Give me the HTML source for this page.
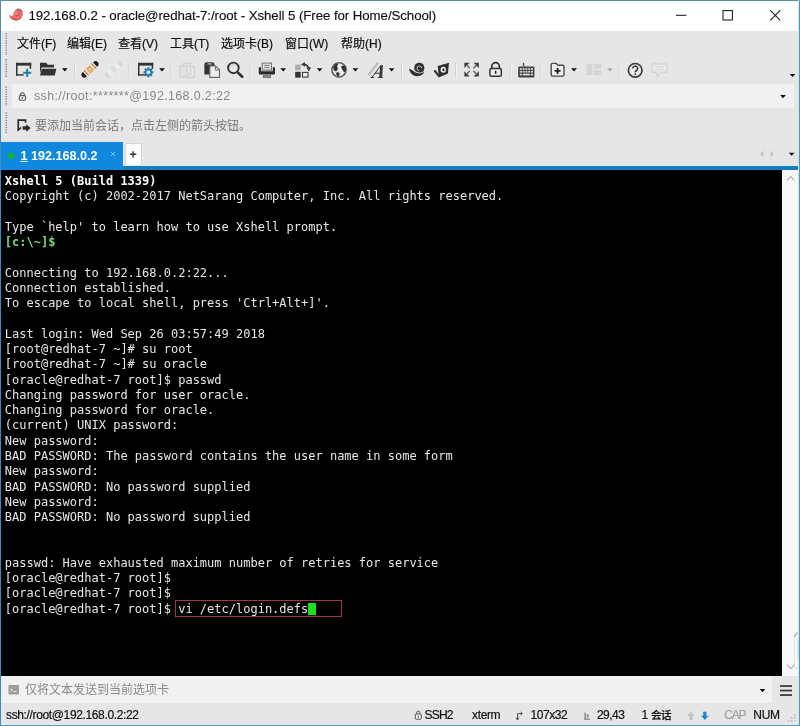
<!DOCTYPE html>
<html lang="zh-CN">
<head>
<meta charset="utf-8">
<title>192.168.0.2 - oracle@redhat-7:/root - Xshell 5 (Free for Home/School)</title>
<style>
*{box-sizing:border-box;margin:0;padding:0}
html,body{width:800px;height:726px;overflow:hidden;background:#e6e6e6}
body{position:relative;font-family:"Liberation Sans","Noto Sans CJK SC",sans-serif;color:#1a1a1a}
.abs{position:absolute}
#soft{will-change:transform;filter:blur(.5px);position:absolute;left:-8px;top:-8px;width:816px;height:742px;background:#4b8fb4}
#win{position:absolute;left:8px;top:8px;width:800px;height:726px;background:#e6e6e6;overflow:hidden}
#titlebar{left:0;top:0;width:800px;height:31px;background:#fff}
#title{left:28.5px;top:6.8px;font-size:13.3px;line-height:17px;color:#111;white-space:nowrap;letter-spacing:-0.085px;-webkit-text-stroke:.15px #111}
.mi{position:absolute;top:37px;font-size:12px;line-height:14px;white-space:nowrap;color:#111;-webkit-text-stroke:.2px #111}
#addr{left:12px;top:84px;width:782px;height:24px;background:#f1f1f1}
#addrtxt{left:34px;top:89px;font-size:12.5px;line-height:15px;color:#888;white-space:nowrap;letter-spacing:.35px}
#hint{left:35px;top:119px;font-size:12px;line-height:14px;color:#787878;white-space:nowrap}
#tab{left:1px;top:142px;width:122px;height:27.500px;background:#0f88de}
#tabtxt{left:20.5px;top:149.4px;font-size:12.6px;line-height:14px;color:#fff;font-weight:bold;white-space:nowrap}
#plus{left:125px;top:143px;width:17px;height:22px;background:#fcfcfc;border:1px solid #d8d8d8;border-bottom:none}
#tabline{left:0;top:165px;width:800px;height:4.500px;background:#177dbf;border-top:1px solid #d3ebf5}
#term{left:1px;top:169.500px;width:781px;height:506.500px;background:#000}
#scroll{left:782px;top:169.500px;width:17px;height:506.500px;background:#f8f8f8}
pre{position:absolute;left:3.8px;top:4.4px;font-family:"DejaVu Sans Mono","Liberation Mono",monospace;font-size:12px;line-height:15.28px;color:#e6e6e6;white-space:pre}
pre b{color:#fff}
pre .g{color:#7ddc7d;font-weight:bold}
#cursor{display:inline-block;width:7.5px;height:12.5px;background:#19e01a;vertical-align:-2.5px}
#redbox{left:174.5px;top:599.5px;width:167px;height:17.5px;border:1px solid #9c3d3a}
#compose{left:1px;top:676px;width:771px;height:27px;background:#f1f1f1}
#composetxt{left:25px;top:683.4px;font-size:12px;line-height:14px;color:#8a8a8a;white-space:nowrap}
.st{position:absolute;top:708.2px;font-size:12px;line-height:14px;white-space:nowrap;color:#111;-webkit-text-stroke:.2px currentColor}
#bl{left:0;top:0;width:1px;height:726px;background:linear-gradient(#5b8b96 0,#5b8b96 31px,#3b8ac4 31px,#3b8ac4 100%)}
#bt{left:0;top:0;width:800px;height:1px;background:#5d9096}
#br{left:798px;top:0;width:2px;height:726px;background:#4f98b8;border-left:1px solid #cfe4ee}
#bb{left:0;top:725px;width:800px;height:1px;background:#4d9fc3}
svg{position:absolute;left:0;top:0;overflow:visible}
</style>
</head>
<body>
<div id="soft">
<div id="win">
<div id="titlebar" class="abs"></div>
<div id="title" class="abs">192.168.0.2 - oracle@redhat-7:/root - Xshell 5 (Free for Home/School)</div>
<div class="mi" style="left:17px">文件(F)</div>
<div class="mi" style="left:67px">编辑(E)</div>
<div class="mi" style="left:118px">查看(V)</div>
<div class="mi" style="left:170px">工具(T)</div>
<div class="mi" style="left:221px">选项卡(B)</div>
<div class="mi" style="left:285px">窗口(W)</div>
<div class="mi" style="left:341px">帮助(H)</div>
<div id="addr" class="abs"></div>
<div id="addrtxt" class="abs">ssh://root:*******@192.168.0.2:22</div>
<div id="hint" class="abs">要添加当前会话，点击左侧的箭头按钮。</div>
<div id="tabline" class="abs"></div>
<div id="tab" class="abs"></div>
<div id="tabtxt" class="abs"><u>1</u> 192.168.0.2</div>
<div id="plus" class="abs"></div>
<div id="term" class="abs"><pre><b>Xshell 5 (Build 1339)</b>
Copyright (c) 2002-2017 NetSarang Computer, Inc. All rights reserved.

Type `help' to learn how to use Xshell prompt.
<span class="g">[c:\~]$</span>

Connecting to 192.168.0.2:22...
Connection established.
To escape to local shell, press 'Ctrl+Alt+]'.

Last login: Wed Sep 26 03:57:49 2018
[root@redhat-7 ~]# su root
[root@redhat-7 ~]# su oracle
[oracle@redhat-7 root]$ passwd
Changing password for user oracle.
Changing password for oracle.
(current) UNIX password:
New password:
BAD PASSWORD: The password contains the user name in some form
New password:
BAD PASSWORD: No password supplied
New password:
BAD PASSWORD: No password supplied


passwd: Have exhausted maximum number of retries for service
[oracle@redhat-7 root]$
[oracle@redhat-7 root]$
[oracle@redhat-7 root]$ vi /etc/login.defs<span id="cursor"></span></pre></div>
<div id="scroll" class="abs"></div>
<div id="redbox" class="abs"></div>
<div id="compose" class="abs"></div>
<div id="composetxt" class="abs">仅将文本发送到当前选项卡</div>
<div class="st" style="left:6px;letter-spacing:-.36px">ssh://root@192.168.0.2:22</div>
<div class="st" style="left:424.5px;letter-spacing:-.8px">SSH2</div>
<div class="st" style="left:472px;letter-spacing:-.35px">xterm</div>
<div class="st" style="left:530.5px;letter-spacing:-.45px">107x32</div>
<div class="st" style="left:597px;letter-spacing:-.55px">29,43</div>
<div class="st" style="left:641.5px;letter-spacing:-.3px">1 <span style="font-size:10.6px;letter-spacing:-.6px;font-weight:500;position:relative;top:-.5px">会话</span></div>
<div class="st" style="left:724.3px;color:#a2a2a2;letter-spacing:-1.2px">CAP</div>
<div class="st" style="left:753.3px;letter-spacing:-.3px">NUM</div>
<svg width="800" height="726" viewBox="0 0 800 726" aria-hidden="true">
<defs>
<path id="dd" d="M-2.9,-1.5H2.9L0,1.6Z"/>
<g id="sep"><rect x="-0.5" y="63" width="1" height="14.500" fill="#d4d4d4"/><rect x="0.5" y="63" width="1" height="14.500" fill="#f2f2f2"/></g>
<g id="winframe" fill="#333"><rect x="0" y="0" width="15.2" height="2.8"/><rect x="0" y="0" width="1.5" height="12.8"/><rect x="0" y="11.4" width="7.6" height="1.4"/><rect x="13.7" y="0" width="1.5" height="6"/></g>
<radialGradient id="logo" cx="0.55" cy="0.5" r="0.6"><stop offset="0" stop-color="#f79a90"/><stop offset="0.55" stop-color="#e8706a"/><stop offset="1" stop-color="#c65050"/></radialGradient>
</defs>
<!-- app logo -->
<g><path d="M9.300,14.200Q10.300,16 12.300,16.600Q13,11.500 16.800,9Q20.300,8.300 22.300,11.200Q23.600,14.800 21.600,17.800Q19,20.600 15.300,20.400Q11.800,20 10,17.300Q9.300,15.800 9.300,14.200Z" fill="url(#logo)"/><path d="M16.800,9.200Q20.500,8.600 22.400,11.600" fill="none" stroke="#8a5a50" stroke-width="1.200" opacity="0.7"/><path d="M15.200,15.300Q16.600,16.500 18.400,15.400Q19.400,14 18.200,12.800" fill="none" stroke="#c23f3f" stroke-width="1.100"/><path d="M10,16.600Q12.500,20.200 16.300,20.200Q19.500,20 21.300,17.800" fill="none" stroke="#b54a4a" stroke-width="1" opacity="0.8"/></g>
<!-- window controls -->
<g stroke="#222" stroke-width="1.1" fill="none">
<path d="M676,15.3H686.5"/>
<rect x="723" y="10.6" width="9.4" height="9.4"/>
<path d="M770.300,10.400L780.200,20.300M780.200,10.400L770.300,20.300"/>
</g>
<!-- grips -->
<g stroke="#6a6a6a" stroke-width="1.2" stroke-dasharray="1.2 1.2" fill="none">
<path d="M6.2,33V55"/><path d="M6.2,59V78"/><path d="M6.2,86.500V106"/><path d="M6.2,112.500V133"/>
</g>
<!-- toolbar -->
<g>
<use href="#winframe" x="16" y="62.800"/>
<path d="M23.200,71.800h3v-3h2v3h3v2h-3v3h-2v-3h-3z" fill="#1a7fa3"/>
<g fill="#333"><path d="M40,62.800h6.200l1.500,1.900h6.300v2.800h-12.400l-1.600,6z"/><path d="M41.800,68.700h14.600l-1.600,6.900h-14.800z"/></g>
<use href="#dd" x="64.800" y="69.800" fill="#111"/>
<use href="#sep" x="74.500"/>
<g transform="translate(90,69.400) rotate(-43)">
<rect x="-10.600" y="-2.900" width="21.200" height="5.800" rx="2.900" fill="#1c1c1c"/>
<rect x="-7" y="-3.300" width="14" height="6.600" rx="0.800" fill="#f7dfc9"/>
<rect x="-2.600" y="-3.300" width="5.200" height="6.600" fill="#e6a866"/>
<rect x="-5.500" y="-3.300" width="0.900" height="6.600" fill="#8a6a50"/><rect x="4.600" y="-3.300" width="0.900" height="6.600" fill="#8a6a50"/>
<rect x="-0.800" y="-0.800" width="1.600" height="1.600" fill="#fff1d0"/>
</g>
<g transform="translate(113.800,69.400) rotate(-43)">
<rect x="-10.600" y="-2.900" width="21.200" height="5.800" rx="2.900" fill="#d8d8d8"/>
<rect x="-7" y="-3.300" width="14" height="6.600" rx="0.800" fill="#eeeeee"/>
<rect x="-2.600" y="-3.300" width="5.200" height="6.600" fill="#dedede"/>
</g>
<use href="#sep" x="129"/>
<use href="#winframe" x="138" y="62.800"/>
<g transform="translate(148.400,72.300)"><g fill="#2778ad"><circle r="3.600"/><rect x="-1.100" y="-5" width="2.200" height="10"/><rect x="-5" y="-1.100" width="10" height="2.200"/><rect x="-1.100" y="-5" width="2.200" height="10" transform="rotate(45)"/><rect x="-5" y="-1.100" width="10" height="2.200" transform="rotate(45)"/></g><circle r="2" fill="#c8edfc"/></g>
<use href="#dd" x="162" y="69.800" fill="#111"/>
<use href="#sep" x="171"/>
<g fill="none" stroke="#d4d4d4" stroke-width="1.300"><path d="M183.500,63.500h7v11h-7z"/><path d="M180,66h7v11h-7z" fill="#e2e2e2"/><path d="M188,66.500h6.500v11h-8"/></g>
<g><path d="M204.400,64.600q0,-2.400 2.400,-2.400h5.400q2.400,0 2.400,2.400v9.800h-10.200z" fill="#333"/><rect x="207.300" y="63" width="4.600" height="1.800" rx="0.900" fill="#9a9a9a"/><path d="M209.800,66h5.800l3.900,3.900v7.500h-9.700z" fill="#eee" stroke="#6a6a6a" stroke-width="1.200"/><path d="M215.400,66v4.100h4.100" fill="none" stroke="#6a6a6a" stroke-width="1"/></g>
<g fill="none" stroke="#333"><circle cx="233.400" cy="67.900" r="5.300" stroke-width="1.900"/><path d="M238,72.600L242.200,76.700" stroke-width="2.700" stroke-linecap="round"/><path d="M231,66.500a3,3 0 0 1 3.500,-1.500" stroke="#bbb" stroke-width="1"/></g>
<use href="#sep" x="250.300"/>
<g><rect x="262.300" y="63.100" width="9.200" height="7" fill="#e4e4e4" stroke="#777" stroke-width="1.100"/><rect x="264.300" y="64.800" width="5.200" height="1" fill="#777"/><rect x="264.300" y="66.900" width="5.200" height="1" fill="#777"/><path d="M258.800,68.200q0,-1.200 1.100,-1.200q1.100,0 1.100,1.200v3h11.800v-3q0,-1.200 1.100,-1.200q1.100,0 1.100,1.200v5q0,1.200 -1.200,1.200h-13.800q-1.200,0 -1.200,-1.200z" fill="#2a2a2a"/><rect x="263.300" y="75.300" width="7.200" height="2.300" fill="#8a8a8a" stroke="#666" stroke-width="0.800"/></g>
<use href="#dd" x="283.200" y="69.800" fill="#111"/>
<g><rect x="295.200" y="64.600" width="5.500" height="5.600" fill="#ababab"/><rect x="295.200" y="71.800" width="5.500" height="5.800" fill="#333"/><rect x="302.500" y="72.400" width="5.500" height="4.700" fill="#f0f0f0" stroke="#3a3a3a" stroke-width="1.100"/><path d="M303.600,64.300Q307.800,64.800 308.700,68.600" fill="none" stroke="#333" stroke-width="1.600"/><path d="M301,64.600l3.900,-2.600l0.200,4.800z" fill="#333"/><path d="M308.900,71.400l-2.400,-3.700l4.500,-0.400z" fill="#333"/></g>
<use href="#dd" x="319.600" y="69.800" fill="#111"/>
<g><circle cx="339" cy="69.800" r="7.100" fill="#ededed" stroke="#606060" stroke-width="1.600"/><path d="M333.300,67.200q0.600,-2.400 2.800,-3.500l2.300,0.300q-1.900,1.700 -1.100,3.300q1.500,1.600 -0.300,3.100q-1.200,1.500 -2.600,0.300q-1.400,-1.400 -1.100,-3.500z" fill="#2e2e2e"/><path d="M341.400,66q2.400,-1 4.200,0.600q1.100,2.900 -0.500,5.400q-1.900,0.500 -2.400,-1.900q-2.100,-1.700 -1.300,-4.100z" fill="#2e2e2e"/><path d="M336.300,72.600q2,-1 3.200,0.500q0.500,2.200 -1.300,3.200q-2.300,-0.600 -1.900,-3.700z" fill="#2e2e2e"/></g>
<use href="#dd" x="355.400" y="69.800" fill="#111"/>
<path d="M368.200,75.400L378.100,62.800" stroke="#bdbdbd" stroke-width="2.300" fill="none"/>
<text transform="translate(370.300,77.600) skewX(-22)" font-family="'Liberation Serif',serif" font-weight="bold" font-size="19.500" fill="#383838" textLength="12.500" lengthAdjust="spacingAndGlyphs">A</text>
<use href="#dd" x="391.600" y="69.800" fill="#111"/>
<use href="#sep" x="401.500"/>
<g><path d="M409,68.600Q412.500,70 415.500,72.600Q419.500,74.300 424,71.500Q423.500,75.200 418.500,76.100Q413.500,76.500 411,73.200Q409.300,71 409,68.600Z" fill="#2e2e2e"/><circle cx="419.300" cy="67.900" r="5.100" fill="#2e2e2e"/><path d="M421.600,68.300a2.300,2.300 0 1 0 -2.300,2.300" fill="none" stroke="#c9c9c9" stroke-width="1"/><path d="M414.600,70.300Q417.200,74.200 423,72.300" fill="none" stroke="#bdbdbd" stroke-width="0.900"/></g>
<g transform="translate(433,62.300)"><path d="M4.700,3.800L16,0.500L14.900,11.200L5.800,15.100Z" fill="#2e2e2e"/><path d="M0.500,8.600L2.300,7.400L5.800,12.200L5.800,15.100Z" fill="#2e2e2e"/><ellipse cx="10.300" cy="7.400" rx="2.700" ry="3" fill="#eee"/><ellipse cx="10.500" cy="7.400" rx="1.100" ry="1.500" fill="#2e2e2e"/></g>
<use href="#sep" x="455.500"/>
<g fill="#3c3c3c"><path d="M464.400,62.800h5.200l-5.200,5.200z"/><path d="M478.800,62.800v5.200l-5.200,-5.200z"/><path d="M464.400,76.400v-5.200l5.200,5.200z"/><path d="M478.800,76.400h-5.200l5.200,-5.200z"/><g stroke="#6a6a6a" stroke-width="1.500"><path d="M466.500,64.900l3.300,3.300M476.700,64.900l-3.300,3.300M466.500,74.300l3.300,-3.300M476.700,74.300l-3.300,-3.300"/></g></g>
<g><path d="M491.800,68.500v-2a3.800,3.800 0 0 1 7.600,0v2" fill="none" stroke="#333" stroke-width="1.700"/><rect x="489.900" y="68.600" width="11.400" height="7.600" rx="1.500" fill="#eee" stroke="#333" stroke-width="1.500"/><rect x="494.900" y="70.800" width="1.500" height="3" fill="#222"/></g>
<use href="#sep" x="510.400"/>
<g><path d="M523.600,62.800v3.500" stroke="#444" stroke-width="1.300"/><rect x="518.200" y="66.400" width="16.200" height="11.100" rx="1.200" fill="#3e3e3e"/><g fill="#dcdcdc"><rect x="519.800" y="68.200" width="2" height="1.700"/><rect x="522.600" y="68.200" width="2" height="1.700"/><rect x="525.400" y="68.200" width="2" height="1.700"/><rect x="528.200" y="68.200" width="2" height="1.700"/><rect x="531" y="68.200" width="2" height="1.700"/><rect x="519.800" y="70.900" width="2" height="1.700"/><rect x="522.600" y="70.900" width="2" height="1.700"/><rect x="525.400" y="70.900" width="2" height="1.700"/><rect x="528.200" y="70.900" width="2" height="1.700"/><rect x="531" y="70.900" width="2" height="1.700"/><rect x="519.800" y="73.700" width="2" height="1.700"/><rect x="522.600" y="73.700" width="7.600" height="1.700"/><rect x="531" y="73.700" width="2" height="1.700"/></g></g>
<use href="#sep" x="540.800"/>
<g><path d="M551.200,64.800q0,-1.400 1.400,-1.400h3.600l1.800,1.900h4.600q1.400,0 1.400,1.400v8q0,1.400 -1.400,1.400h-10q-1.400,0 -1.400,-1.400z" fill="#eee" stroke="#4a4a4a" stroke-width="1.400"/><path d="M554.600,70h2.100v-2.100h1.800v2.100h2.100v1.800h-2.100v2.100h-1.800v-2.100h-2.100z" fill="#222"/></g>
<use href="#dd" x="574" y="69.800" fill="#111"/>
<g fill="#d5d5d5"><rect x="586.500" y="64" width="6" height="11.200"/><rect x="593.800" y="64" width="7.600" height="4.800"/><rect x="593.800" y="70.400" width="7.600" height="4.800"/></g>
<use href="#dd" x="610" y="69.800" fill="#a6a6a6"/>
<use href="#sep" x="619.200"/>
<g><circle cx="635.200" cy="70.300" r="6.800" fill="#eee" stroke="#3a3a3a" stroke-width="1.700"/><path d="M632.800,68.400a2.400,2.400 0 1 1 3.600,2.100q-1.100,0.600 -1.100,1.700" fill="none" stroke="#333" stroke-width="1.600"/><rect x="634.500" y="73.200" width="1.600" height="1.600" fill="#333"/></g>
<g fill="none" stroke="#d6d6d6" stroke-width="1.400"><path d="M652.200,64h14.600v8.200h-6l-3.600,4.500v-4.500h-5z" fill="#ebebeb"/><path d="M655,67h9M655,69.500h9" stroke-width="1"/></g>
<use href="#dd" x="792.500" y="75.400" fill="#111"/>
</g>
<!-- address bar -->
<g><path d="M20.500,95.600v-1a1.900,1.900 0 0 1 3.800,0v1" fill="none" stroke="#555" stroke-width="1.100"/><rect x="19.300" y="95.600" width="6.200" height="4.700" rx="1.100" fill="#f1f1f1" stroke="#555" stroke-width="1.100"/><rect x="21.900" y="97.100" width="1.100" height="1.700" fill="#444"/></g>
<use href="#dd" x="783" y="96.600" fill="#111"/>
<!-- hint icon -->
<g fill="#2b2b2b"><path d="M17.400,119.200h9v3.600h-1.700v-1.900h-5.600v7.300l2,-1.600v2.200l-3.700,3z"/><path d="M22.600,126.200h3.600v-2l4.500,3.800l-4.500,3.800v-2h-3.600z"/></g>
<!-- tab -->
<circle cx="11.100" cy="155.700" r="3.300" fill="#10b336"/>
<path d="M110.900,151.900l4.200,4.200M115.100,151.900l-4.200,4.200" stroke="#7fc2f0" stroke-width="1" fill="none"/>
<path d="M130,154.300h6.200M133.100,151.200v6.200" stroke="#333" stroke-width="1.400" fill="none"/>
<g fill="#c4c4c4"><path d="M763.500,150.500v7l-3.500,-3.500z"/><path d="M770.500,150.500v7l3.500,-3.500z"/></g>
<use href="#dd" x="791.700" y="154.200" fill="#111"/>
<!-- scrollbar -->
<g fill="none" stroke="#b0b0b0" stroke-width="1.200"><path d="M787,180.300l3.700,-3.700l3.700,3.700"/><path d="M787,664.800l3.700,3.700l3.700,-3.700"/></g>
<!-- edge artefact -->
<g><rect x="794.500" y="632.500" width="8" height="36" rx="2.500" fill="#fbfbfb" stroke="#dcdcdc" stroke-width="1"/><path d="M794.300,636.500l3,-3.300" stroke="#777" stroke-width="1" fill="none"/><rect x="797.800" y="639" width="3" height="20" fill="#1f7fc0"/><rect x="797.500" y="661" width="3" height="6" fill="#fbf3d8"/></g>
<!-- compose bar -->
<g><rect x="8.500" y="685" width="10.500" height="9.500" rx="1.200" fill="#9d9d9d"/><path d="M10.500,688.500l2,1.500l-2,1.500" fill="none" stroke="#eee" stroke-width="0.900"/><rect x="13.500" y="691" width="3" height="0.900" fill="#eee"/></g>
<use href="#dd" x="762.500" y="690.600" fill="#111"/>
<g fill="#333"><rect x="780" y="685.200" width="12" height="1.700"/><rect x="780" y="689.700" width="12" height="1.700"/><rect x="780" y="694.200" width="12" height="1.700"/></g>
<!-- status bar icons -->
<g><path d="M416.600,714v-1.200a1.700,1.700 0 0 1 3.400,0v1.200" fill="none" stroke="#555" stroke-width="1"/><rect x="415.300" y="714" width="6" height="5.200" rx="0.800" fill="#eee" stroke="#555" stroke-width="1"/><rect x="417.800" y="715.800" width="1" height="1.700" fill="#444"/></g>
<g fill="none" stroke="#555" stroke-width="1"><path d="M517.500,720v-6.500h4.500"/><path d="M520.500,712l2,1.500l-2,1.500" /><path d="M516,717.500l1.500,2.500l1.500,-2.500"/></g>
<g fill="#777"><rect x="584.500" y="712.500" width="1.200" height="7"/><rect x="584.500" y="718.500" width="5.500" height="1.200"/><rect x="586.700" y="714" width="2" height="3.500" fill="#999"/></g>
<path d="M689.400,720v-4h-2.100l3.700,-4.300l3.700,4.300h-2.100v4z" fill="#c3c3c3"/>
<path d="M703.200,711.800v4h-2.100l3.700,4.300l3.700,-4.300h-2.100v-4z" fill="#1e88d2"/>
<g fill="#bdbdbd"><rect x="794" y="720" width="1.500" height="1.500"/><rect x="791" y="720" width="1.500" height="1.500"/><rect x="788" y="720" width="1.500" height="1.500"/><rect x="794" y="717" width="1.500" height="1.500"/><rect x="791" y="717" width="1.500" height="1.500"/><rect x="794" y="714" width="1.500" height="1.500"/></g>
</svg>

<div id="bl" class="abs"></div><div id="bt" class="abs"></div><div id="br" class="abs"></div><div id="bb" class="abs"></div>
</div>
</div>
</body>
</html>
